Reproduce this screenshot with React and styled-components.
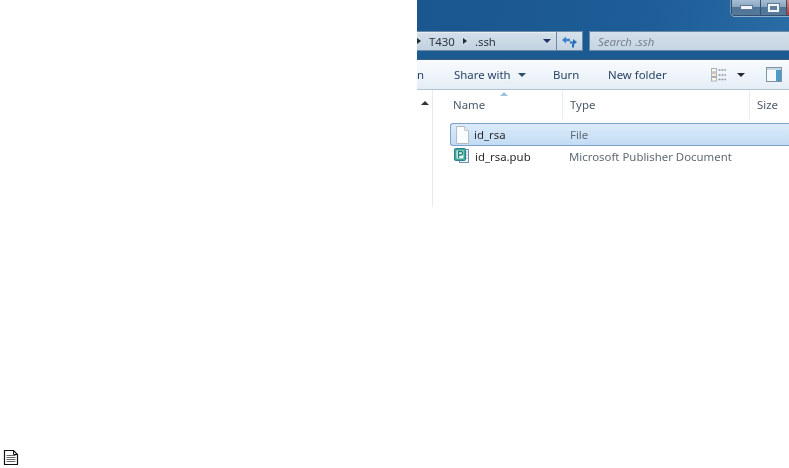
import React from "react";
import styled, {createGlobalStyle} from "styled-components";

const Global = createGlobalStyle`
  html, body {
    margin: 0;
    padding: 0;
    background: #fff;
  }
  body {
    font-family: "Noto Sans", "Open Sans", sans-serif;
  }
`;

const Page = styled.div`
  width: 789px;
  height: 468px;
  display: flex;
  flex-direction: column;
  justify-content: space-between;
  overflow: hidden;
`;

const Explorer = styled.div`
  width: 372px;
  height: 207px;
  margin-left: 417px;
  display: flex;
  flex-direction: column;
  overflow: hidden;
  filter: blur(0.4px);
`;

const TitleBar = styled.div`
  height: 31px;
  flex: none;
  display: flex;
  justify-content: flex-end;
  align-items: flex-start;
  background: linear-gradient(100deg, #1a5690 0%, #1d5c96 60%, #2a6ca6 100%);
`;

const CaptionButtons = styled.div`
  display: flex;
  height: 15px;
  border: 1px solid #33506e;
  border-top: none;
  border-right: none;
  border-bottom-left-radius: 4px;
  box-shadow: 0 1px 0 #8fb0cc, -1px 0 0 #6f95b8;
`;

const CaptionButton = styled.div`
  width: ${p => p.$width}px;
  display: flex;
  align-items: center;
  justify-content: center;
  background: ${p => p.$close
    ? "linear-gradient(#d98a80, #b8392c)"
    : "linear-gradient(#a7bed4 0%, #8ba6c0 45%, #4f7496 50%, #56799b 100%)"};
  border-left: ${p => p.$first ? "none" : "1px solid #34536f"};
`;

const MinGlyph = styled.div`
  width: 11px;
  height: 3px;
  background: #f2f5f8;
  box-shadow: 0 0 0 1px #5c7b98;
`;

const MaxGlyph = styled.div`
  width: 7px;
  height: 4px;
  border: 2px solid #f2f5f8;
  background: #5f7f9e;
  box-shadow: 0 0 0 1px #5c7b98;
`;

const AddressBand = styled.div`
  height: 29px;
  flex: none;
  display: flex;
  box-sizing: border-box;
  padding-bottom: 8px;
  background: #1c5a92;
  border-bottom: 1px solid #3a5f80;
`;

const AddressBox = styled.div`
  width: 140px;
  flex: none;
  box-sizing: border-box;
  display: flex;
  align-items: center;
  font-size: 11.4px;
  color: #2a3440;
  background: linear-gradient(#d4e0ea, #c2d2e0);
  border: 1px solid #6c8aa6;
  border-left: none;
  box-shadow: inset 0 1px 0 #e6eef4;
`;

const Crumbs = styled.div`
  flex: 1;
  display: flex;
  align-items: center;
  gap: 8px;
  white-space: nowrap;
`;

const Caret = styled.span`
  display: block;
  flex: none;
  width: 0;
  height: 0;
  border-style: solid;
  border-width: ${p => p.$right ? "3.5px 0 3.5px 4px" : "4px 4px 0 4px"};
  border-color: ${p => p.$right
    ? `transparent transparent transparent ${p.$color || "#1f2a36"}`
    : `${p.$color || "#1f2a36"} transparent transparent transparent`};
`;

const DropZone = styled.div`
  width: 19px;
  display: flex;
  justify-content: center;
  flex: none;
`;

const RefreshButton = styled.div`
  width: 26px;
  flex: none;
  box-sizing: border-box;
  display: flex;
  align-items: center;
  justify-content: center;
  background: linear-gradient(#d6e2ec, #c4d4e2);
  border: 1px solid #6c8aa6;
  border-left: none;
`;

const SearchBox = styled.div`
  flex: 1;
  margin-left: 6px;
  box-sizing: border-box;
  display: flex;
  align-items: center;
  padding-left: 8px;
  font-size: 11.4px;
  font-style: italic;
  color: #75828e;
  background: linear-gradient(#d4e0ea, #c6d5e2);
  border: 1px solid #6c8aa6;
  border-right: none;
`;

const Toolbar = styled.div`
  height: 30px;
  flex: none;
  box-sizing: border-box;
  display: flex;
  align-items: center;
  font-size: 11.4px;
  color: #2a4262;
  white-space: nowrap;
  background: linear-gradient(#f8fbfe 0%, #eff5fa 50%, #e4edf6 100%);
  border-bottom: 1px solid #b4c3d2;
`;

const ToolItem = styled.div`
  flex: none;
  width: ${p => p.$width}px;
  display: flex;
  align-items: center;
  gap: 7px;
`;

const Body = styled.div`
  flex: 1;
  display: flex;
  background: #fff;
  color: #2a2a2a;
`;

const NavPane = styled.div`
  width: 15px;
  flex: none;
  display: flex;
  justify-content: center;
  padding-top: 11px;
  border-right: 1px solid #e3ecf4;
`;

const NavArrow = styled.span`
  display: block;
  width: 0;
  height: 0;
  border-style: solid;
  border-width: 0 4px 4px 4px;
  border-color: transparent transparent #333 transparent;
`;

const List = styled.div`
  flex: 1;
  min-width: 0;
  position: relative;
`;

const Header = styled.div`
  height: 33px;
  display: grid;
  grid-template-columns: 116px 187px 1fr;
  padding-left: 20px;
  font-size: 11.4px;
  color: #4a5a6a;
`;

const HeaderCell = styled.div`
  padding-top: 7px;
  height: 22px;
  line-height: 16px;
`;

const HeaderType = styled(HeaderCell)`
  border-left: 1px solid #e6edf3;
  margin-left: -7px;
  padding-left: 7px;
`;

const SortArrow = styled.span`
  position: absolute;
  left: 67px;
  top: 2px;
  width: 0;
  height: 0;
  border-style: solid;
  border-width: 0 4px 4px 4px;
  border-color: transparent transparent #9dc4de transparent;
`;

const Row = styled.div`
  height: ${p => p.$selected ? 23 : 20}px;
  box-sizing: border-box;
  margin-left: 17px;
  display: grid;
  grid-template-columns: 119px 1fr;
  align-items: center;
  font-size: 11.4px;
  ${p => p.$selected && `
    background: linear-gradient(#dcebfa, #c2dcf5);
    border: 1px solid #7da2ce;
    border-right: none;
    border-top-left-radius: 3px;
    border-bottom-left-radius: 3px;
  `}
`;

const NameCell = styled.div`
  display: flex;
  align-items: center;
  gap: 4px;
  padding-left: ${p => p.$selected ? 3 : 4}px;
`;

const TypeCell = styled.div`
  color: #5f6b76;
  white-space: nowrap;
`;

const NoteIcon = styled.div`
  margin: 0 0 2px 3px;
  width: 16px;
  height: 17px;
`;

const RefreshIcon = () => (
  <svg width="17" height="13" viewBox="0 0 17 13">
    <path d="M1 5 L5 1.5 V3.8 H9 V6.2 H5 V8.5 Z" fill="#3d7fc8"/>
    <path d="M16 7 L12 10.5 V8.5 H9 V6.5 H12 V4 Z" fill="#2c6fb8"/>
    <path d="M11 9 V12.5 H13 V9 Z" fill="#2c6fb8"/>
  </svg>
);

const ViewIcon = () => (
  <svg width="16" height="14" viewBox="0 0 16 14">
    <rect x="0.5" y="0.5" width="5" height="3.5" fill="#fdf6e3" stroke="#a9b3bd"/>
    <rect x="0.5" y="5" width="5" height="3.5" fill="#fbe9c8" stroke="#a9b3bd"/>
    <rect x="0.5" y="9.5" width="5" height="3.5" fill="#fdf6e3" stroke="#a9b3bd"/>
    <path d="M7.5 2 H15 M7.5 7 H15 M7.5 11.5 H15" stroke="#8b97a3" strokeWidth="1.4" strokeDasharray="2 1"/>
  </svg>
);

const PaneIcon = () => (
  <svg width="16" height="15" viewBox="0 0 16 15">
    <rect x="0.5" y="0.5" width="15" height="14" fill="#f6f9fc" stroke="#7f93a6"/>
    <rect x="10" y="1" width="5" height="13" fill="#4d9cc7"/>
    <rect x="1" y="1" width="14" height="2" fill="#c9d8e4"/>
  </svg>
);

const BlankFileIcon = () => (
  <svg width="16" height="18" viewBox="0 0 16 18">
    <path d="M2.5 0.5 H10.5 L14.5 4.5 V17.5 H2.5 Z" fill="#fbfcfd" stroke="#b4bbc2"/>
    <path d="M10.5 0.5 V4.5 H14.5" fill="#e9edf0" stroke="#c2c8ce"/>
  </svg>
);

const PublisherIcon = () => (
  <svg width="17" height="16" viewBox="0 0 17 16">
    <rect x="5.5" y="1.5" width="9" height="13" fill="#f4f8f8" stroke="#6d8fae"/>
    <path d="M11.5 4 H13.5 M11.5 7 H13.5 M11.5 10 H13.5" stroke="#8fa8bc"/>
    <rect x="0.5" y="0.5" width="11" height="12" rx="1" fill="#3ea597" stroke="#2f7f96"/>
    <rect x="2.5" y="2.5" width="7" height="8" fill="#e4f5f1"/>
    <path d="M4.5 10 V3.5 H7 A1.7 1.7 0 0 1 7 7 H4.5" fill="none" stroke="#1c8374" strokeWidth="1.3"/>
  </svg>
);

const DocIcon = () => (
  <svg width="16" height="17" viewBox="0 0 16 17">
    <path d="M1.5 1.5 H10.5 L14.5 5.5 V15.5 H1.5 Z" fill="#fff" stroke="#111" strokeWidth="1.2"/>
    <path d="M10.5 1.5 V5.5 H14.5" fill="none" stroke="#111"/>
    <path d="M3.5 6.5 H12.5 M3.5 8.5 H12.5 M3.5 10.5 H12.5 M3.5 12.5 H12.5" stroke="#666"/>
  </svg>
);

export default function App() {
  return <Page>
    <Global/>
    <Explorer>
      <TitleBar>
        <CaptionButtons>
          <CaptionButton $width={28} $first><MinGlyph/></CaptionButton>
          <CaptionButton $width={25}><MaxGlyph/></CaptionButton>
          <CaptionButton $width={2} $close/>
        </CaptionButtons>
      </TitleBar>
      <AddressBand>
        <AddressBox>
          <Crumbs>
            <Caret $right/>
            <span>T430</span>
            <Caret $right/>
            <span>.ssh</span>
          </Crumbs>
          <DropZone><Caret $color="#1c2f66"/></DropZone>
        </AddressBox>
        <RefreshButton><RefreshIcon/></RefreshButton>
        <SearchBox>Search .ssh</SearchBox>
      </AddressBand>
      <Toolbar>
        <ToolItem $width={37}>n</ToolItem>
        <ToolItem $width={99}>Share with <Caret $color="#2a4a70"/></ToolItem>
        <ToolItem $width={55}>Burn</ToolItem>
        <ToolItem $width={103}>New folder</ToolItem>
        <ToolItem $width={26}><ViewIcon/></ToolItem>
        <ToolItem $width={29}><Caret $color="#1f2a36"/></ToolItem>
        <ToolItem $width={16}><PaneIcon/></ToolItem>
      </Toolbar>
      <Body>
        <NavPane><NavArrow/></NavPane>
        <List>
          <SortArrow/>
          <Header>
            <HeaderCell>Name</HeaderCell>
            <HeaderType>Type</HeaderType>
            <HeaderType>Size</HeaderType>
          </Header>
          <Row $selected>
            <NameCell $selected><BlankFileIcon/>id_rsa</NameCell>
            <TypeCell>File</TypeCell>
          </Row>
          <Row>
            <NameCell><PublisherIcon/>id_rsa.pub</NameCell>
            <TypeCell>Microsoft Publisher Document</TypeCell>
          </Row>
        </List>
      </Body>
    </Explorer>
    <NoteIcon><DocIcon/></NoteIcon>
  </Page>;
}
